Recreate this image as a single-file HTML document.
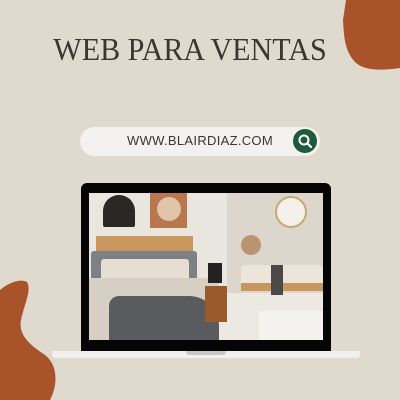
<!DOCTYPE html><html><head><style>
body{margin:0;width:400px;height:400px;background:#e0d9cd;position:relative;overflow:hidden;font-family:"Liberation Sans",sans-serif}
.a{position:absolute}
</style></head><body>
<svg class="a" style="left:0;top:0" width="400" height="400">
<path d="M346,0 L400,0 L400,68 C385,70 365,72 355,62 C344,50 344,35 343,20 Z" fill="#a9532a"/>
<path d="M0,290 C8,283 20,278 27,282 C32,290 24,305 21,320 C18,335 30,345 45,355 C58,365 58,385 50,400 L0,400 Z" fill="#a9532a"/>
</svg>
<div class="a" style="left:-10px;width:400px;top:31px;text-align:center;font-family:'Liberation Serif',serif;font-size:32px;color:#3d3530;transform:scaleX(0.94)">WEB PARA VENTAS</div>
<div class="a" style="left:80px;top:127px;width:240px;height:29px;border-radius:15px;background:#f3f2f0"></div>
<div class="a" style="left:80px;top:133px;width:240px;text-align:center;font-size:13px;color:#3a3532;letter-spacing:0.3px">WWW.BLAIRDIAZ.COM</div>
<svg class="a" style="left:293px;top:129px" width="24" height="24"><circle cx="12" cy="12" r="12" fill="#1e5a3c"/><circle cx="11" cy="11" r="4.5" fill="none" stroke="#fff" stroke-width="2"/><path d="M14.5,14.5 L18,18" stroke="#fff" stroke-width="2.2" stroke-linecap="round"/></svg>
<div class="a" style="left:81px;top:183px;width:250px;height:170px;background:#050505;border-radius:6px 6px 0 0"></div>
<div class="a" style="left:89px;top:193px;width:234px;height:147px;background:#e9e5df;overflow:hidden">
 <div class="a" style="left:138px;top:0;width:96px;height:147px;background:#ddd6cc"></div>
 <div class="a" style="left:0;top:100px;width:234px;height:47px;background:#ece8e2"></div>
 <div class="a" style="left:14px;top:2px;width:32px;height:32px;border-radius:16px 16px 2px 2px;background:#2a2725"></div>
 <div class="a" style="left:61px;top:0;width:37px;height:35px;background:#b9774e"></div>
 <div class="a" style="left:68px;top:4px;width:24px;height:24px;border-radius:50%;background:#e0c3a8"></div>
 <div class="a" style="left:7px;top:43px;width:97px;height:15px;background:#c9975d"></div>
 <div class="a" style="left:2px;top:58px;width:106px;height:30px;background:#7d8084;border-radius:3px"></div>
 <div class="a" style="left:12px;top:66px;width:88px;height:25px;background:#e6ded2;border-radius:3px"></div>
 <div class="a" style="left:0;top:85px;width:130px;height:62px;background:#d8cfc4"></div>
 <div class="a" style="left:20px;top:103px;width:110px;height:44px;background:#595b5f;border-radius:10px 30px 0 0"></div>
 <div class="a" style="left:119px;top:70px;width:14px;height:20px;background:#222"></div>
 <div class="a" style="left:116px;top:93px;width:22px;height:36px;background:#9b5a2c"></div>
 <div class="a" style="left:186px;top:3px;width:28px;height:28px;border-radius:50%;background:#f4f0ea;border:2px solid #c9a877"></div>
 <div class="a" style="left:152px;top:42px;width:20px;height:20px;border-radius:50%;background:#b89470"></div>
 <div class="a" style="left:152px;top:72px;width:82px;height:22px;background:#ebe5dc;border-radius:4px"></div>
 <div class="a" style="left:152px;top:90px;width:82px;height:8px;background:#c9975d"></div>
 <div class="a" style="left:182px;top:72px;width:12px;height:30px;background:#4b4a49"></div>
 <div class="a" style="left:170px;top:118px;width:64px;height:29px;background:#f4f2ee"></div>
</div>
<div class="a" style="left:52px;top:351px;width:308px;height:7px;background:#f1f0ee;border-radius:0 0 3px 3px"></div>
<div class="a" style="left:186px;top:351px;width:40px;height:4px;background:#c9c8c6;border-radius:0 0 3px 3px"></div>
</body></html>
